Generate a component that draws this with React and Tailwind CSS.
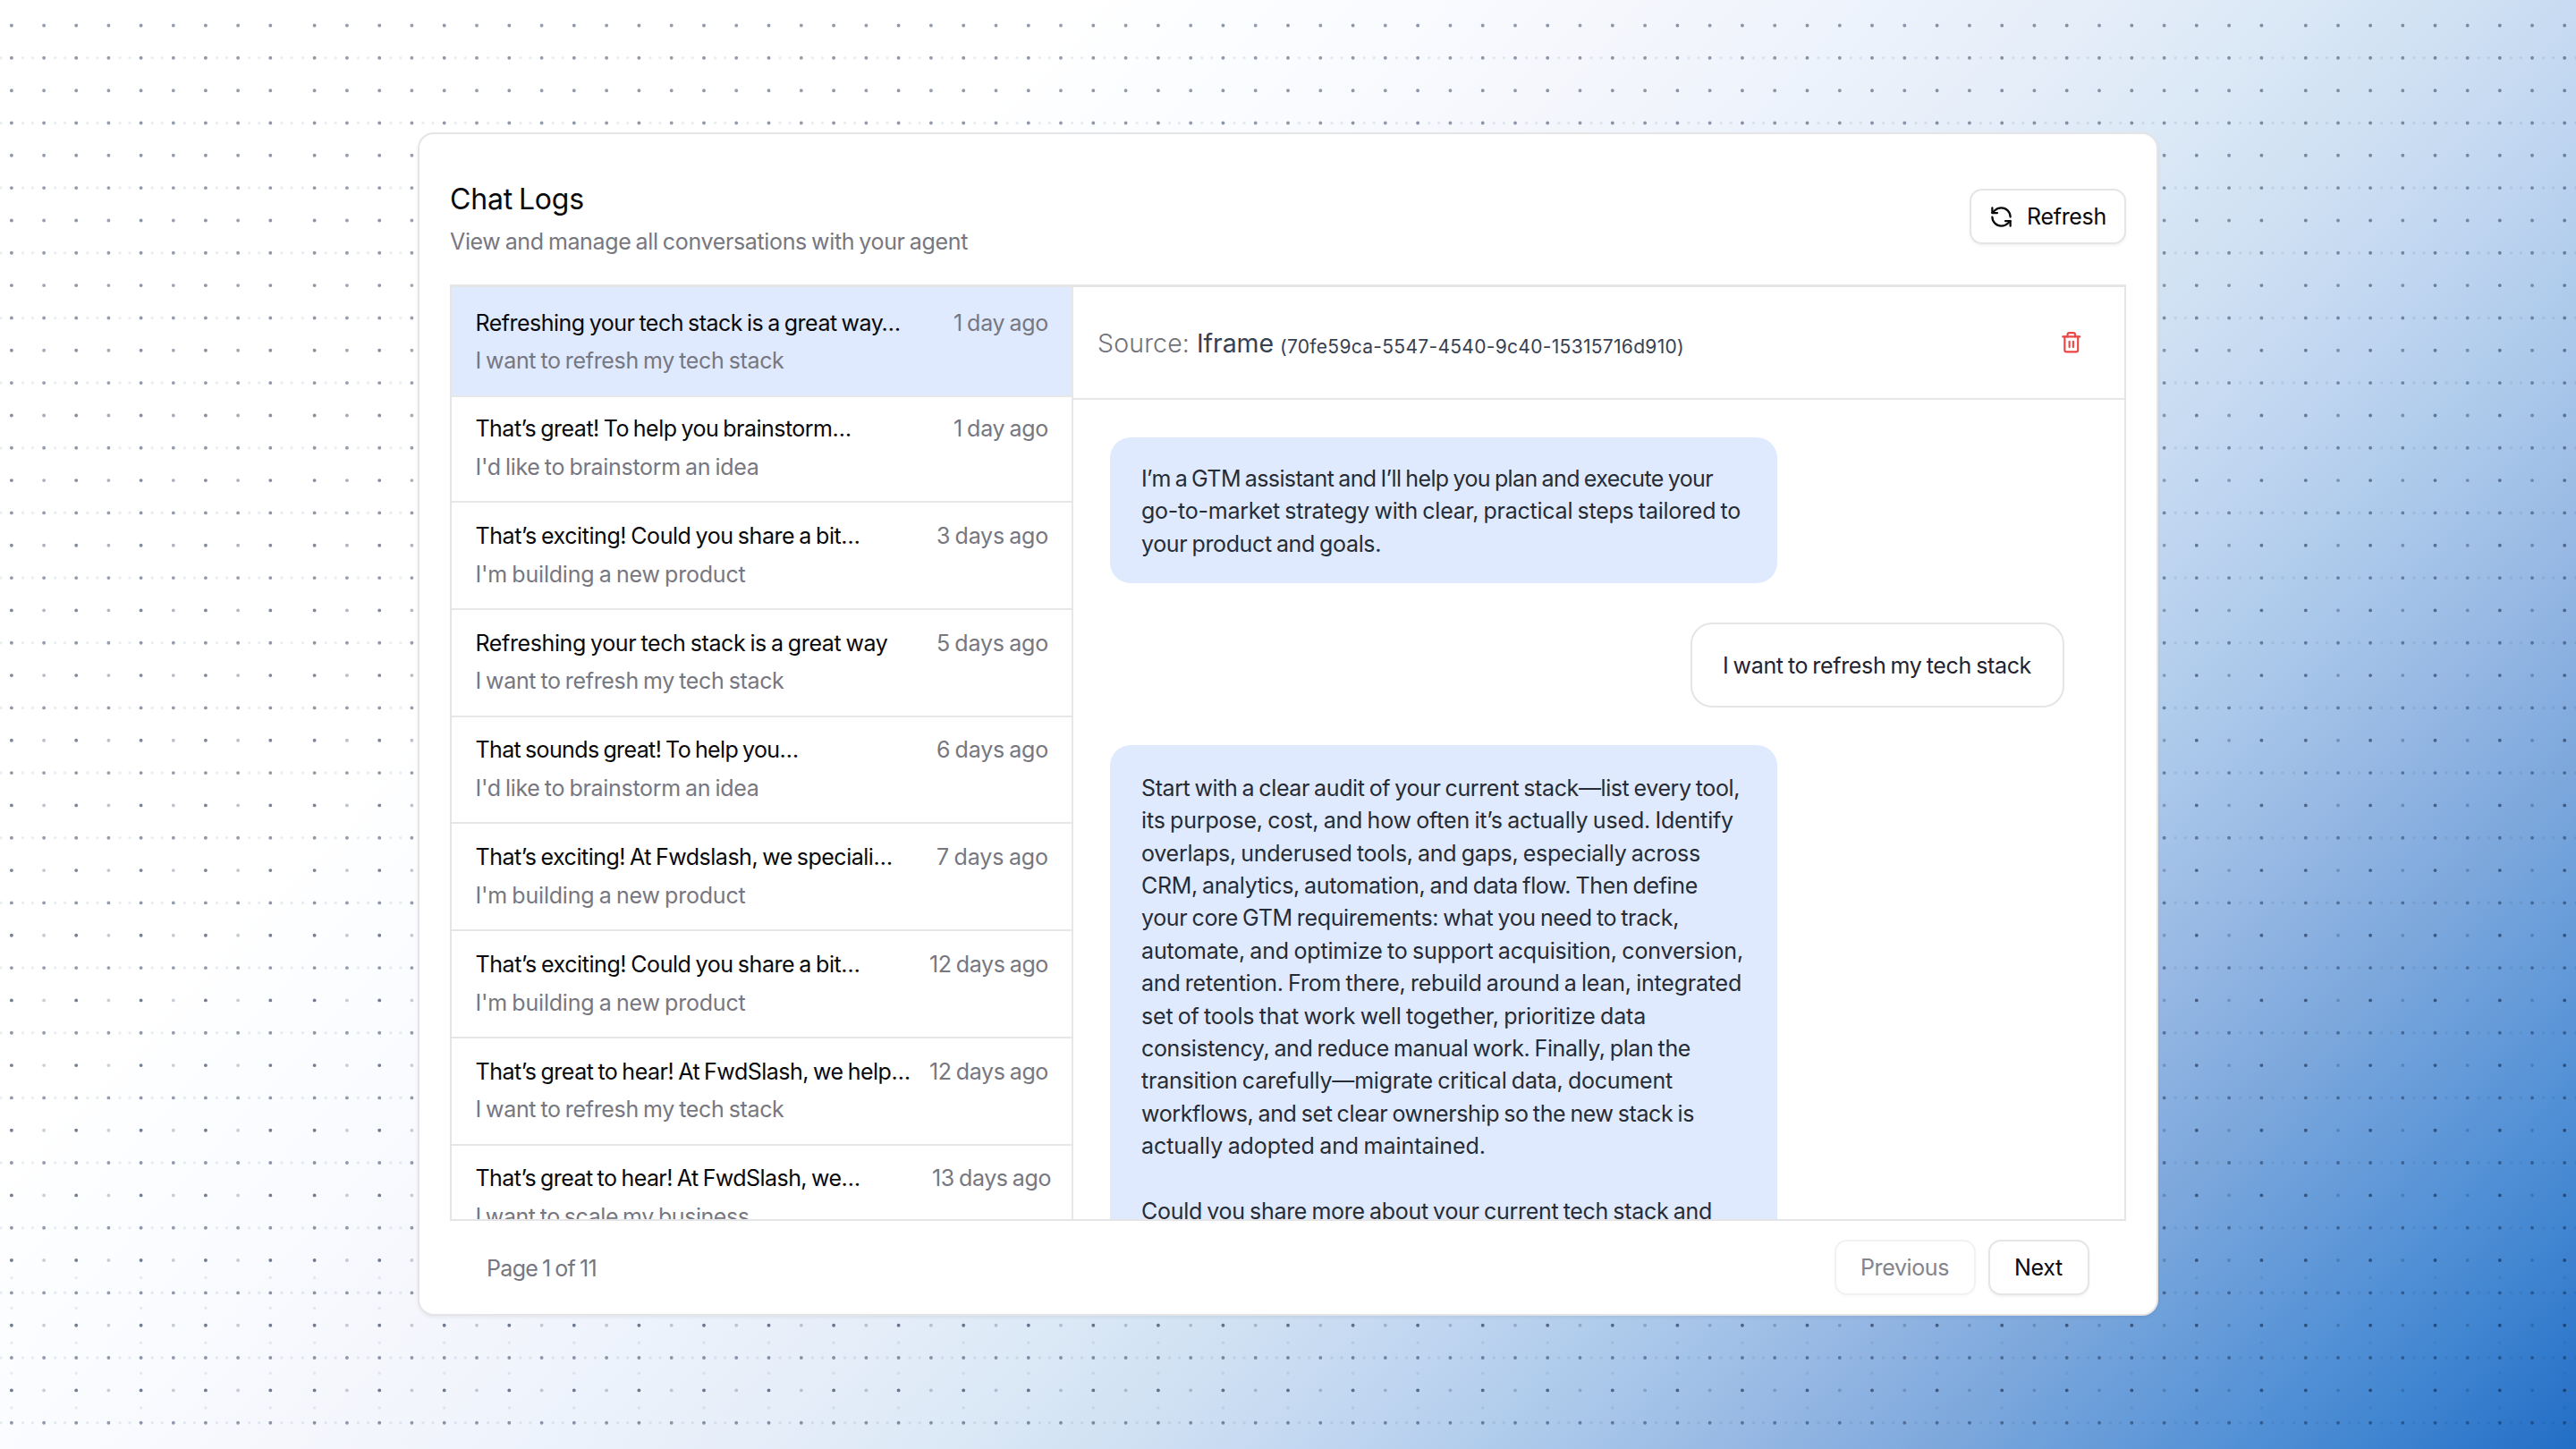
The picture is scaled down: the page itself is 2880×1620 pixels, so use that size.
import { useLayoutEffect, useRef, useState } from "react";
import { RefreshCcw, Trash2 } from "lucide-react";

/* A single line of text tracked so that it fills the given width. */
function Line({ w, className = "", children }) {
  const ref = useRef(null);
  const [tracking, setTracking] = useState(0);
  useLayoutEffect(() => {
    const natural = ref.current.getBoundingClientRect().width;
    setTracking((w + 1 - natural) / String(children).length);
  }, [w, children]);
  return (
    <span
      ref={ref}
      className={"inline-block whitespace-nowrap [word-spacing:-0.06em] " + className}
      style={{ letterSpacing: tracking + "px" }}
    >
      {children}
    </span>
  );
}

const range = (n) => Array.from({ length: n }, (_, i) => i);
const columns = [
  ...range(9).map((k) => 12.9 + k * 36.17),
  ...range(61).map((k) => 351.6 + k * 36.28),
  ...range(9).map((k) => 2577.8 + k * 36.17),
];
const evenColumn = (c) => (c < 9 ? c : c < 70 ? c - 9 : c - 70) % 2 === 0;
const rows = range(44).map((r) => 28.5 + r * 36.33);
const dot = (x, y) => `M${x.toFixed(1)} ${y.toFixed(1)}h.01`;

function DotGrid() {
  const small = [];
  rows.forEach((y, r) => {
    if (r % 2 === 1) {
      small.push(dot(1, y));
      columns.forEach((x, c) => {
        small.push(dot(x + 12.6, y), dot(x + 23.6, y));
        if (c === 8 || c === 69) small.push(dot(x + 36.2, y));
      });
    }
    if (y > 1380 && r < 43) {
      columns.forEach((x, c) => {
        if (evenColumn(c)) small.push(dot(x, y + (r % 2 ? 17.2 : 19.6)));
      });
    }
  });
  return (
    <svg className="absolute inset-0" width="2880" height="1620" fill="none" stroke="#10203f" strokeLinecap="round">
      {rows.map((y, r) => {
        const fade = r % 2 ? 0 : Math.min(1, Math.max(0, (y - 150) / 1000));
        return (
          <g key={r} strokeWidth="3.9">
            <path opacity={0.46 + 0.12 * fade} d={columns.filter((_, c) => evenColumn(c)).map((x) => dot(x, y)).join("")} />
            <path
              opacity={0.44 - 0.23 * fade}
              d={columns.filter((_, c) => !evenColumn(c)).map((x) => dot(x, y)).join("")}
            />
          </g>
        );
      })}
      <path opacity="0.08" strokeWidth="3.6" d={small.join("")} />
    </svg>
  );
}

const conversations = [
  ["Refreshing your tech stack is a great way…", 474, "I want to refresh my tech stack", 344, "1 day ago", 105],
  ["That’s great! To help you brainstorm…", 419, "I'd like to brainstorm an idea", 316, "1 day ago", 105],
  ["That’s exciting! Could you share a bit…", 429, "I'm building a new product", 301, "3 days ago", 124],
  ["Refreshing your tech stack is a great way", 460, "I want to refresh my tech stack", 344, "5 days ago", 124],
  ["That sounds great! To help you…", 360, "I'd like to brainstorm an idea", 316, "6 days ago", 124],
  ["That’s exciting! At Fwdslash, we speciali…", 465, "I'm building a new product", 301, "7 days ago", 124],
  ["That’s exciting! Could you share a bit…", 429, "I'm building a new product", 301, "12 days ago", 132],
  ["That’s great to hear! At FwdSlash, we help…", 485, "I want to refresh my tech stack", 344, "12 days ago", 132],
  ["That’s great to hear! At FwdSlash, we…", 429, "I want to scale my business", 305, "13 days ago", 132],
];

const greeting = [
  ["I’m a GTM assistant and I’ll help you plan and execute your", 638],
  ["go-to-market strategy with clear, practical steps tailored to", 669],
  ["your product and goals.", 267],
];

const answer = [
  ["Start with a clear audit of your current stack—list every tool,", 668],
  ["its purpose, cost, and how often it’s actually used. Identify", 661],
  ["overlaps, underused tools, and gaps, especially across", 624],
  ["CRM, analytics, automation, and data flow. Then define", 621],
  ["your core GTM requirements: what you need to track,", 600],
  ["automate, and optimize to support acquisition, conversion,", 672],
  ["and retention. From there, rebuild around a lean, integrated", 670],
  ["set of tools that work well together, prioritize data", 563],
  ["consistency, and reduce manual work. Finally, plan the", 613],
  ["transition carefully—migrate critical data, document", 593],
  ["workflows, and set clear ownership so the new stack is", 617],
  ["actually adopted and maintained.", 384],
  ["", 0],
  ["Could you share more about your current tech stack and", 637],
];

function Paragraph({ lines }) {
  return (
    <div className="flex flex-col items-start text-[#262c35] leading-[36.4px]">
      {lines.map(([text, w], i) =>
        text ? <Line key={i} w={w}>{text}</Line> : <div key={i} className="h-[36.4px]" />
      )}
    </div>
  );
}

function Conversation({ item, index }) {
  const [title, tw, preview, pw, time, mw] = item;
  const height = index === 0 ? "h-[122.5px] bg-[#e0eaff]" : index === 1 ? "h-[118.5px]" : "h-[119.75px]";
  return (
    <div className={"flex shrink-0 flex-col justify-end border-b-2 border-[#e7e7e9] pb-[16.5px] pl-[26.5px] pr-[26px] leading-[42.7px] " + height}>
      <div className="flex justify-between">
        <Line w={tw} className="text-[#09090b]">{title}</Line>
        <Line w={mw} className={"text-[#77777f] " + (index === 8 ? "-mr-[3px]" : "")}>{time}</Line>
      </div>
      <div className="flex text-[#77777f]">
        <Line w={pw}>{preview}</Line>
      </div>
    </div>
  );
}

export default function App() {
  return (
    <div className="relative h-[1620px] w-[2880px] overflow-hidden bg-[linear-gradient(132.9deg,#ffffff_869px,#fafcff_1103px,#f3f5fc_1418px,#edf3fc_1529px,#e6eef9_1696px,#dce9f6_1865px,#cfe0f3_2032px,#bfd5f0_2199px,#aac8ea_2366px,#95b7e3_2532px,#7ba7dc_2699px,#5e97d8_2865px,#4186d1_3032px,#2b74c9_3163px,#236fc6_3211px)] font-['Inter',sans-serif] text-[25px]">
      <DotGrid />
      <div className="relative mx-[467px] mt-[148px] flex h-[1323px] flex-col rounded-[18px] border-2 border-[#e5e5e7] bg-white px-[34px] shadow-[0_2px_4px_rgba(0,0,0,0.06)]">
        <header className="flex h-[168px] shrink-0 items-start justify-between">
          <div className="flex flex-col items-start pt-[52px]">
            <Line w={149} className="text-[32px] leading-[42px] text-[#09090b]">Chat Logs</Line>
            <Line w={578} className="mt-[7px] leading-[38px] text-[#77777f]">View and manage all conversations with your agent</Line>
          </div>
          <button className="mt-[61px] flex h-[62px] w-[175px] items-center rounded-[14px] border-2 border-[#e5e5e7] bg-white pl-[20px] text-[#09090b] shadow-[0_2px_3px_rgba(0,0,0,0.05)]">
            <RefreshCcw size={27} strokeWidth={2} />
            <Line w={88} className="ml-[15px] leading-[38px]">Refresh</Line>
          </button>
        </header>

        <main className="flex h-[1047px] shrink-0 overflow-hidden border-2 border-t-[3px] border-[#e5e5e7]">
          <aside className="flex w-[695px] shrink-0 flex-col overflow-hidden border-r-2 border-[#e7e7e9]">
            {conversations.map((item, i) => (
              <Conversation key={i} item={item} index={i} />
            ))}
          </aside>
          <section className="flex min-w-0 flex-1 flex-col overflow-hidden">
            <div className="flex h-[126px] shrink-0 items-center justify-between border-b-2 border-[#e7e7e9] pl-[27px] pr-[47px]">
              <div className="flex items-baseline pt-[4px] text-[28.5px] leading-[42px]">
                <Line w={102} className="font-light text-[#71717a]">Source:</Line>
                <Line w={85} className="ml-[8px] text-[#374151]">Iframe</Line>
                <Line w={451} className="relative top-[1px] ml-[7px] text-[21px] text-[#374151]">(70fe59ca-5547-4540-9c40-15315716d910)</Line>
              </div>
              <Trash2 size={25.5} strokeWidth={2} className="text-[#ef4444]" />
            </div>
            <div className="flex flex-col overflow-hidden pl-[41px] pr-[67px] pt-[42px]">
              <div className="w-[746px] shrink-0 self-start rounded-[23px] bg-[#e0eaff] pb-[26px] pl-[35px] pt-[28px]">
                <Paragraph lines={greeting} />
              </div>
              <div className="mt-[44px] flex h-[95px] w-[418px] shrink-0 items-center self-end rounded-[24px] border-2 border-[#e5e5e7] bg-white pl-[34px] pt-[2px] text-[#1f2430]">
                <Line w={344}>I want to refresh my tech stack</Line>
              </div>
              <div className="mt-[42px] w-[746px] shrink-0 self-start rounded-[23px] bg-[#e0eaff] pb-[27px] pl-[35px] pt-[29.5px]">
                <Paragraph lines={answer} />
              </div>
            </div>
          </section>
        </main>

        <footer className="flex items-start justify-between pl-[41px] pr-[41px]">
          <Line w={122} className="mt-[34px] leading-[38px] text-[#77777f]">Page 1 of 11</Line>
          <div className="mt-[21px] flex gap-[14px]">
            <button className="flex h-[62px] w-[158px] items-center justify-center rounded-[14px] border-2 border-[#f2f2f3] bg-white pr-[1px] pt-[2px] text-[#84848b] shadow-[0_2px_3px_rgba(0,0,0,0.025)]">
              <Line w={98}>Previous</Line>
            </button>
            <button className="flex h-[62px] w-[113px] items-center justify-center rounded-[14px] border-2 border-[#e5e5e7] bg-white pr-[1px] pt-[2px] text-[#09090b] shadow-[0_2px_3px_rgba(0,0,0,0.05)]">
              <Line w={53}>Next</Line>
            </button>
          </div>
        </footer>
      </div>
    </div>
  );
}
